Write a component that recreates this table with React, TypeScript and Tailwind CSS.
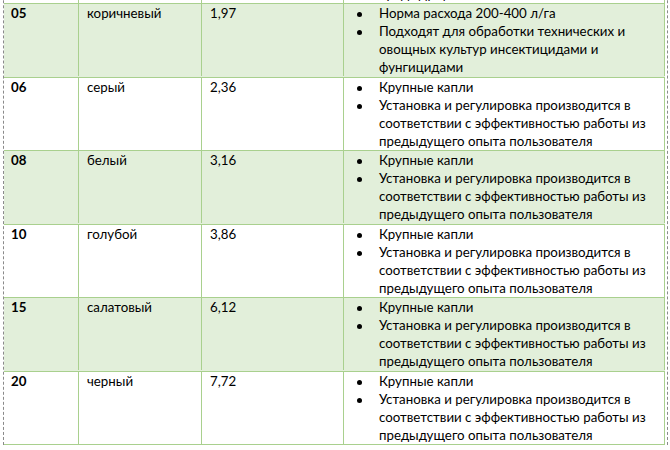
import React from 'react';

type Row = {
  code: string;
  color: string;
  value: string;
  notes: string[][];
  shaded: boolean;
};

const bigDrops = ['Крупные капли'];
const adjust = [
  'Установка и регулировка производится в',
  'соответствии с эффективностью работы из',
  'предыдущего опыта пользователя',
];

// the row before 05 is only peeking in at the top edge
const rows: Row[] = [
  { code: '', color: '', value: '', notes: [bigDrops, adjust], shaded: false },
  {
    code: '05',
    color: 'коричневый',
    value: '1,97',
    notes: [
      ['Норма расхода 200-400 л/га'],
      ['Подходят для обработки технических и', 'овощных культур инсектицидами и', 'фунгицидами'],
    ],
    shaded: true,
  },
  { code: '06', color: 'серый', value: '2,36', notes: [bigDrops, adjust], shaded: false },
  { code: '08', color: 'белый', value: '3,16', notes: [bigDrops, adjust], shaded: true },
  { code: '10', color: 'голубой', value: '3,86', notes: [bigDrops, adjust], shaded: false },
  { code: '15', color: 'салатовый', value: '6,12', notes: [bigDrops, adjust], shaded: true },
  { code: '20', color: 'черный', value: '7,72', notes: [bigDrops, adjust], shaded: false },
];

function NozzleRow({ row, last }: { row: Row; last: boolean }) {
  return (
    <div
      className={`grid grid-cols-[75px_123px_142px_321px] border-t border-[#a9d08e] pb-[0.5px] ${
        last ? 'border-b' : ''
      } ${row.shaded ? 'bg-[#e2efda]' : 'bg-white'}`}
    >
      <div className="border-r border-[#a9d08e] pl-[7px] font-bold">{row.code}</div>
      <div className="border-r border-[#a9d08e] pl-[8px]">{row.color}</div>
      <div className="border-r border-[#a9d08e] pl-[8px]">{row.value}</div>
      <ul className="border-r border-[#a9d08e]">
        {row.notes.map((lines, i) => (
          <li key={i} className="flex">
            <span className="w-[35px] shrink-0">
              <span className="ml-[13px] mt-[8px] block h-[5px] w-[5px] rounded-full bg-black" />
            </span>
            <span className="whitespace-nowrap">
              {lines.map((line, j) => (
                <span key={j} className="block">
                  {line}
                </span>
              ))}
            </span>
          </li>
        ))}
      </ul>
    </div>
  );
}

export default function App() {
  return (
    <div className="h-[450px] w-[670px] overflow-hidden bg-white font-['Lato',sans-serif] text-[13.3px] leading-[18px] text-black">
      <div className="ml-[3px] w-[665px] border-x border-dashed border-[#8a8a8a]">
        <div className="-mt-[70.5px] w-[661px]">
          {rows.map((row, i) => (
            <NozzleRow key={i} row={row} last={i === rows.length - 1} />
          ))}
        </div>
      </div>
    </div>
  );
}
